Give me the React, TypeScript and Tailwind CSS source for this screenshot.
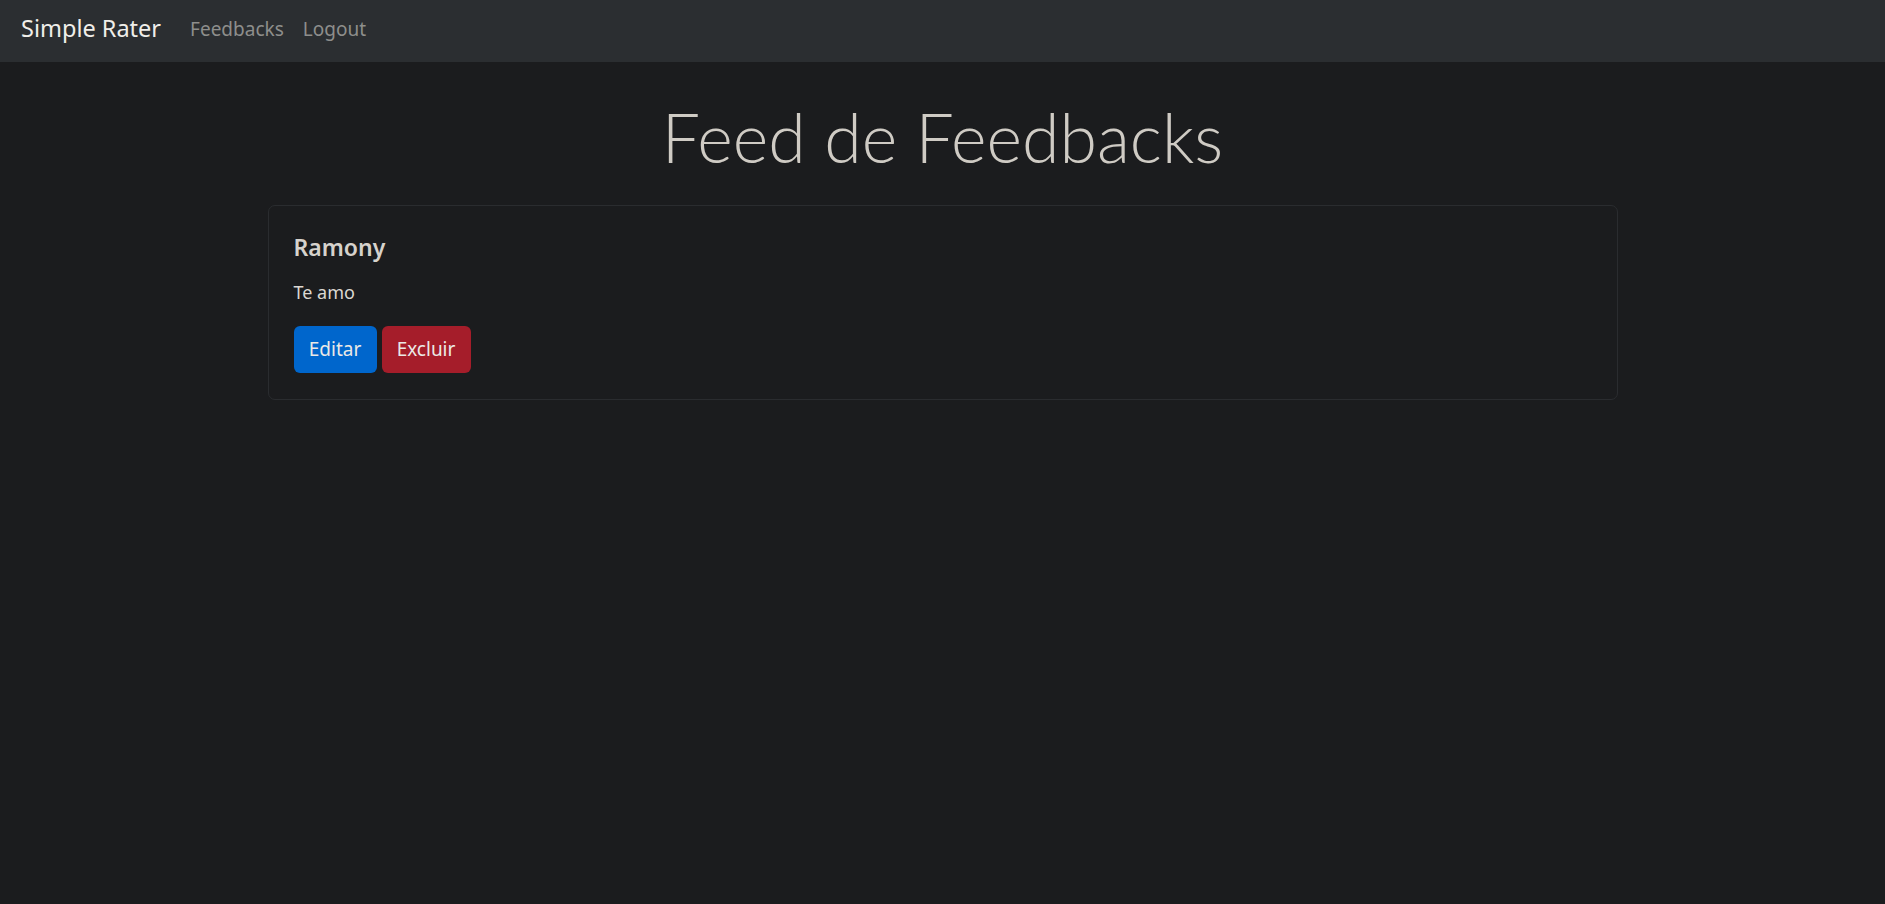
export default function App() {
  return (
    <div className="min-h-screen w-full bg-[#1b1c1e] font-['Noto_Sans',sans-serif] text-[#dcd8d2]">
      {/* navbar */}
      <nav className="flex h-[62px] items-center bg-[#2b2e31] px-[21px] pb-[4px]">
        <span className="mr-[29px] text-[23.5px] text-[#f0eeea]">Simple Rater</span>
        <div className="flex gap-[19px] text-[19px] text-[#8e8e8c]">
          <span>Feedbacks</span>
          <span>Logout</span>
        </div>
      </nav>

      <main className="mx-auto w-[1350px]">
        <h1 className="pt-[34px] pb-[27px] text-center font-['Lato',sans-serif] text-[68px] font-light leading-[1.2] text-[#cfcbc4]">
          Feed de Feedbacks
        </h1>

        <div className="rounded-[7px] border border-[#2a2c2f] px-[25px] pt-[28px] pb-[26px]">
          <h5 className="text-[23px] font-semibold leading-[1.2] text-[#d6d2cc]">Ramony</h5>
          <p className="mt-[18px] text-[18px] text-[#dcd8d2]">Te amo</p>
          <div className="mt-[20px] flex gap-[5px]">
            <button className="h-[47px] w-[83px] rounded-[6px] bg-[#0066cc] text-[19px] text-[#ebe9e6]">
              Editar
            </button>
            <button className="h-[47px] w-[89px] rounded-[6px] bg-[#a51d2a] text-[19px] text-[#ebe9e6]">
              Excluir
            </button>
          </div>
        </div>
      </main>
    </div>
  );
}
